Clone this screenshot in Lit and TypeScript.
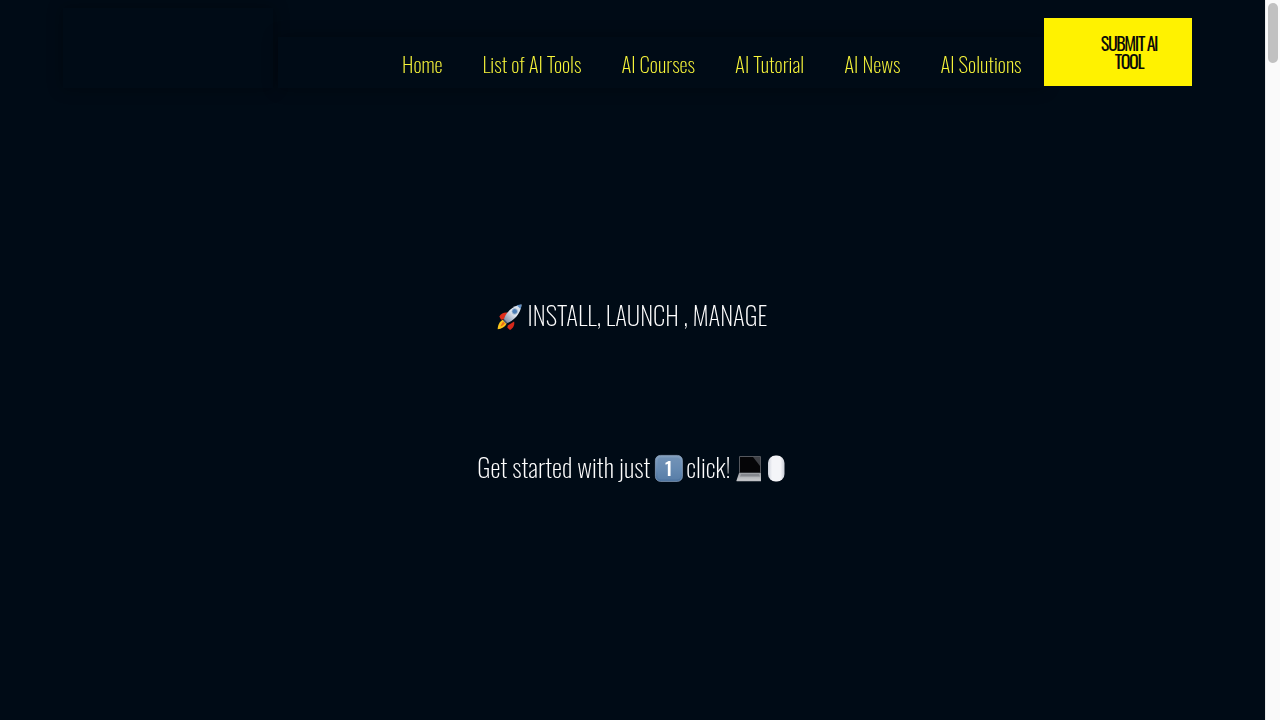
import { LitElement, html, css, svg } from "lit";
import { customElement } from "lit/decorators.js";

const NAV = ["Home", "List of AI Tools", "AI Courses", "AI Tutorial", "AI News", "AI Solutions"];

const icon = (w: number, h: number, vb: string, body: unknown) => html`<svg class="ico" style="width:${w}px;height:${h}px" viewBox=${vb}>${body}</svg>`;

const rocket = svg`
  <defs>
    <linearGradient id="rb" x1="10" y1="20" x2="24" y2="6" gradientUnits="userSpaceOnUse"><stop offset="0" stop-color="#7f8ea8"/><stop offset=".55" stop-color="#e6ebf3"/><stop offset="1" stop-color="#d4deea"/></linearGradient>
  </defs>
  <g transform="translate(15 15) scale(1.12) translate(-14.5 -16)">
    <path d="M3.5 27 C3.5 23 5.5 20 8 18.5 L11.5 22 C10 25 7 26.5 3.5 27Z" fill="#f9c51c"/>
    <path d="M6 24.5 C6.5 22.5 7.5 21 8.5 20.2 L10 21.6 C9 23 7.8 24 6 24.5Z" fill="#ec6f16"/>
    <path d="M5 15.5 C6.5 12.5 9.5 11.5 12.5 12 L9 18 L6.5 18.5Z" fill="#e02d1b"/>
    <path d="M14.5 27.5 C17.5 26 18.8 23 18.2 20 L12.5 23.5 L12.2 25.5Z" fill="#d6281a"/>
    <path d="M8.6 19.3 C10 12.5 17 5.6 24.8 4.8 C24.4 12.8 17.2 20 11 21.9Z" fill="url(#rb)"/>
    <path d="M20.5 5.6 C22 5.1 23.5 4.9 24.8 4.8 C24.7 6 24.4 7.4 24 8.8Z" fill="#5f8fc4"/>
    <circle cx="18.7" cy="11" r="2.5" fill="#4d7fb8" stroke="#b9c6d6" stroke-width=".7"/>
    <path d="M8.6 19.3 L11 21.9 L12.2 21.2 L9.4 18.1Z" fill="#4f5868"/>
  </g>
`;

const keycap = svg`
  <defs>
    <linearGradient id="kb" x1="0" y1="0" x2="0" y2="1"><stop offset="0" stop-color="#85a1c0"/><stop offset=".5" stop-color="#6a8eb5"/><stop offset="1" stop-color="#4a719d"/></linearGradient>
  </defs>
  <rect x="2.4" y="2.4" width="27" height="26" rx="5" fill="url(#kb)" stroke="#93abc5" stroke-width=".7"/>
  <rect x="4.5" y="4.5" width="23" height="22" rx="3.5" fill="#6388b0" opacity=".5"/>
  <text x="15.6" y="23" text-anchor="middle" font-family="Oswald, sans-serif" font-weight="500" font-size="19" fill="#fff">1</text>
`;

const laptop = svg`
  <defs>
    <linearGradient id="lb" x1="0" y1="0" x2="0" y2="1"><stop offset="0" stop-color="#9a9da2"/><stop offset="1" stop-color="#c8cacd"/></linearGradient>
  </defs>
  <rect x="5" y="3" width="22" height="18" rx="1" fill="#55585e"/>
  <rect x="6" y="4" width="20" height="15.5" fill="#050507"/>
  <path d="M19 4 H26 V13Z" fill="#3e4045"/>
  <path d="M5 20 H27 L29.5 27.5 H2.5Z" fill="url(#lb)"/>
  <path d="M7 21 H25 L26 23.5 H6Z" fill="#85888e"/>
  <rect x="2.5" y="27" width="27" height="1.3" rx=".6" fill="#bfc1c5"/>
`;

const mouse = svg`
  <defs>
    <linearGradient id="mb" x1="0" y1="0" x2="1" y2="0"><stop offset="0" stop-color="#cfd3dc"/><stop offset=".25" stop-color="#f4f5f8"/><stop offset=".75" stop-color="#f4f5f8"/><stop offset="1" stop-color="#c9cdd6"/></linearGradient>
  </defs>
  <rect x="34" y="2.5" width="16.5" height="26" rx="7.5" fill="url(#mb)"/>
`;

@customElement("app-root")
export class AppRoot extends LitElement {
  static styles = css`
    :host { display: flex; height: 720px; overflow: hidden; background: #000b16; font-family: Oswald, "Open Sans", sans-serif; font-weight: 200; }
    .page { flex: 1; min-width: 0; display: flex; flex-direction: column; }
    .bar { width: 15px; background: #fafafa; border-left: 1px solid #ececec; box-sizing: border-box; padding: 3px 2px 0 2px; }
    .thumb { height: 60px; background: #c1c1c1; border-radius: 5px; }
    header { display: flex; align-items: flex-start; padding-left: 63px; height: 88px; }
    .logo { width: 210px; height: 80px; margin-top: 8px; background: #000b16; box-shadow: 0 0 14px rgba(0,0,0,.35); }
    nav { width: 766px; height: 51px; margin: 37px 0 0 5px; padding: 3px 2px 0 0; box-sizing: border-box; background: #000b16; box-shadow: 0 0 14px rgba(0,0,0,.35); display: flex; justify-content: flex-end; }
    .links { display: flex; will-change: transform; }
    .links a { padding: 0 20px; color: #f8f63a; font-size: 21px; line-height: 48px; white-space: nowrap; }
    .cta { width: 148px; height: 68px; margin-top: 18px; background: #fff200; color: #0a0a0a; display: flex; align-items: center; justify-content: center; text-align: center; box-sizing: border-box; padding: 0 20px 0 42px; font-size: 18px; line-height: 18px; letter-spacing: -1.4px; font-weight: 400; }
    main { display: flex; flex-direction: column; align-items: center; color: #fff; padding-top: 206px; will-change: transform; }
    .line { display: flex; align-items: center; white-space: nowrap; height: 40px; font-size: 25px; }
    .second { margin-top: 112px; font-size: 26px; }
    h2, p { margin: 0; font: inherit; }
    .ico { display: block; flex: none; margin-top: 4px; }
    .first .ico { margin-top: 6px; }
    .gap3 { margin-left: 3px; }
    .gap1 { margin-left: 1px; }
    .tail { margin-right: 3px; }
  `;
  render() {
    return html`
      <div class="page">
        <header>
          <div class="logo"></div>
          <nav><div class="links">${NAV.map(n => html`<a>${n}</a>`)}</div></nav>
          <div class="cta">SUBMIT AI TOOL</div>
        </header>
        <main>
          <div class="line first">
            ${icon(30, 30, "0 0 30 30", rocket)}
            <h2 class="gap3 tail">INSTALL, LAUNCH , MANAGE</h2>
          </div>
          <div class="line second">
            <p>Get started with just</p>
            <span class="gap3">${icon(32, 30, "0 0 32 30", keycap)}</span>
            <p class="gap1">click!</p>
            <span class="gap3">${icon(27, 30, "0 0 27 30", laptop)}</span>
            ${icon(27, 30, "27 0 27 30", mouse)}
          </div>
        </main>
      </div>
      <div class="bar"><div class="thumb"></div></div>
    `;
  }
}
